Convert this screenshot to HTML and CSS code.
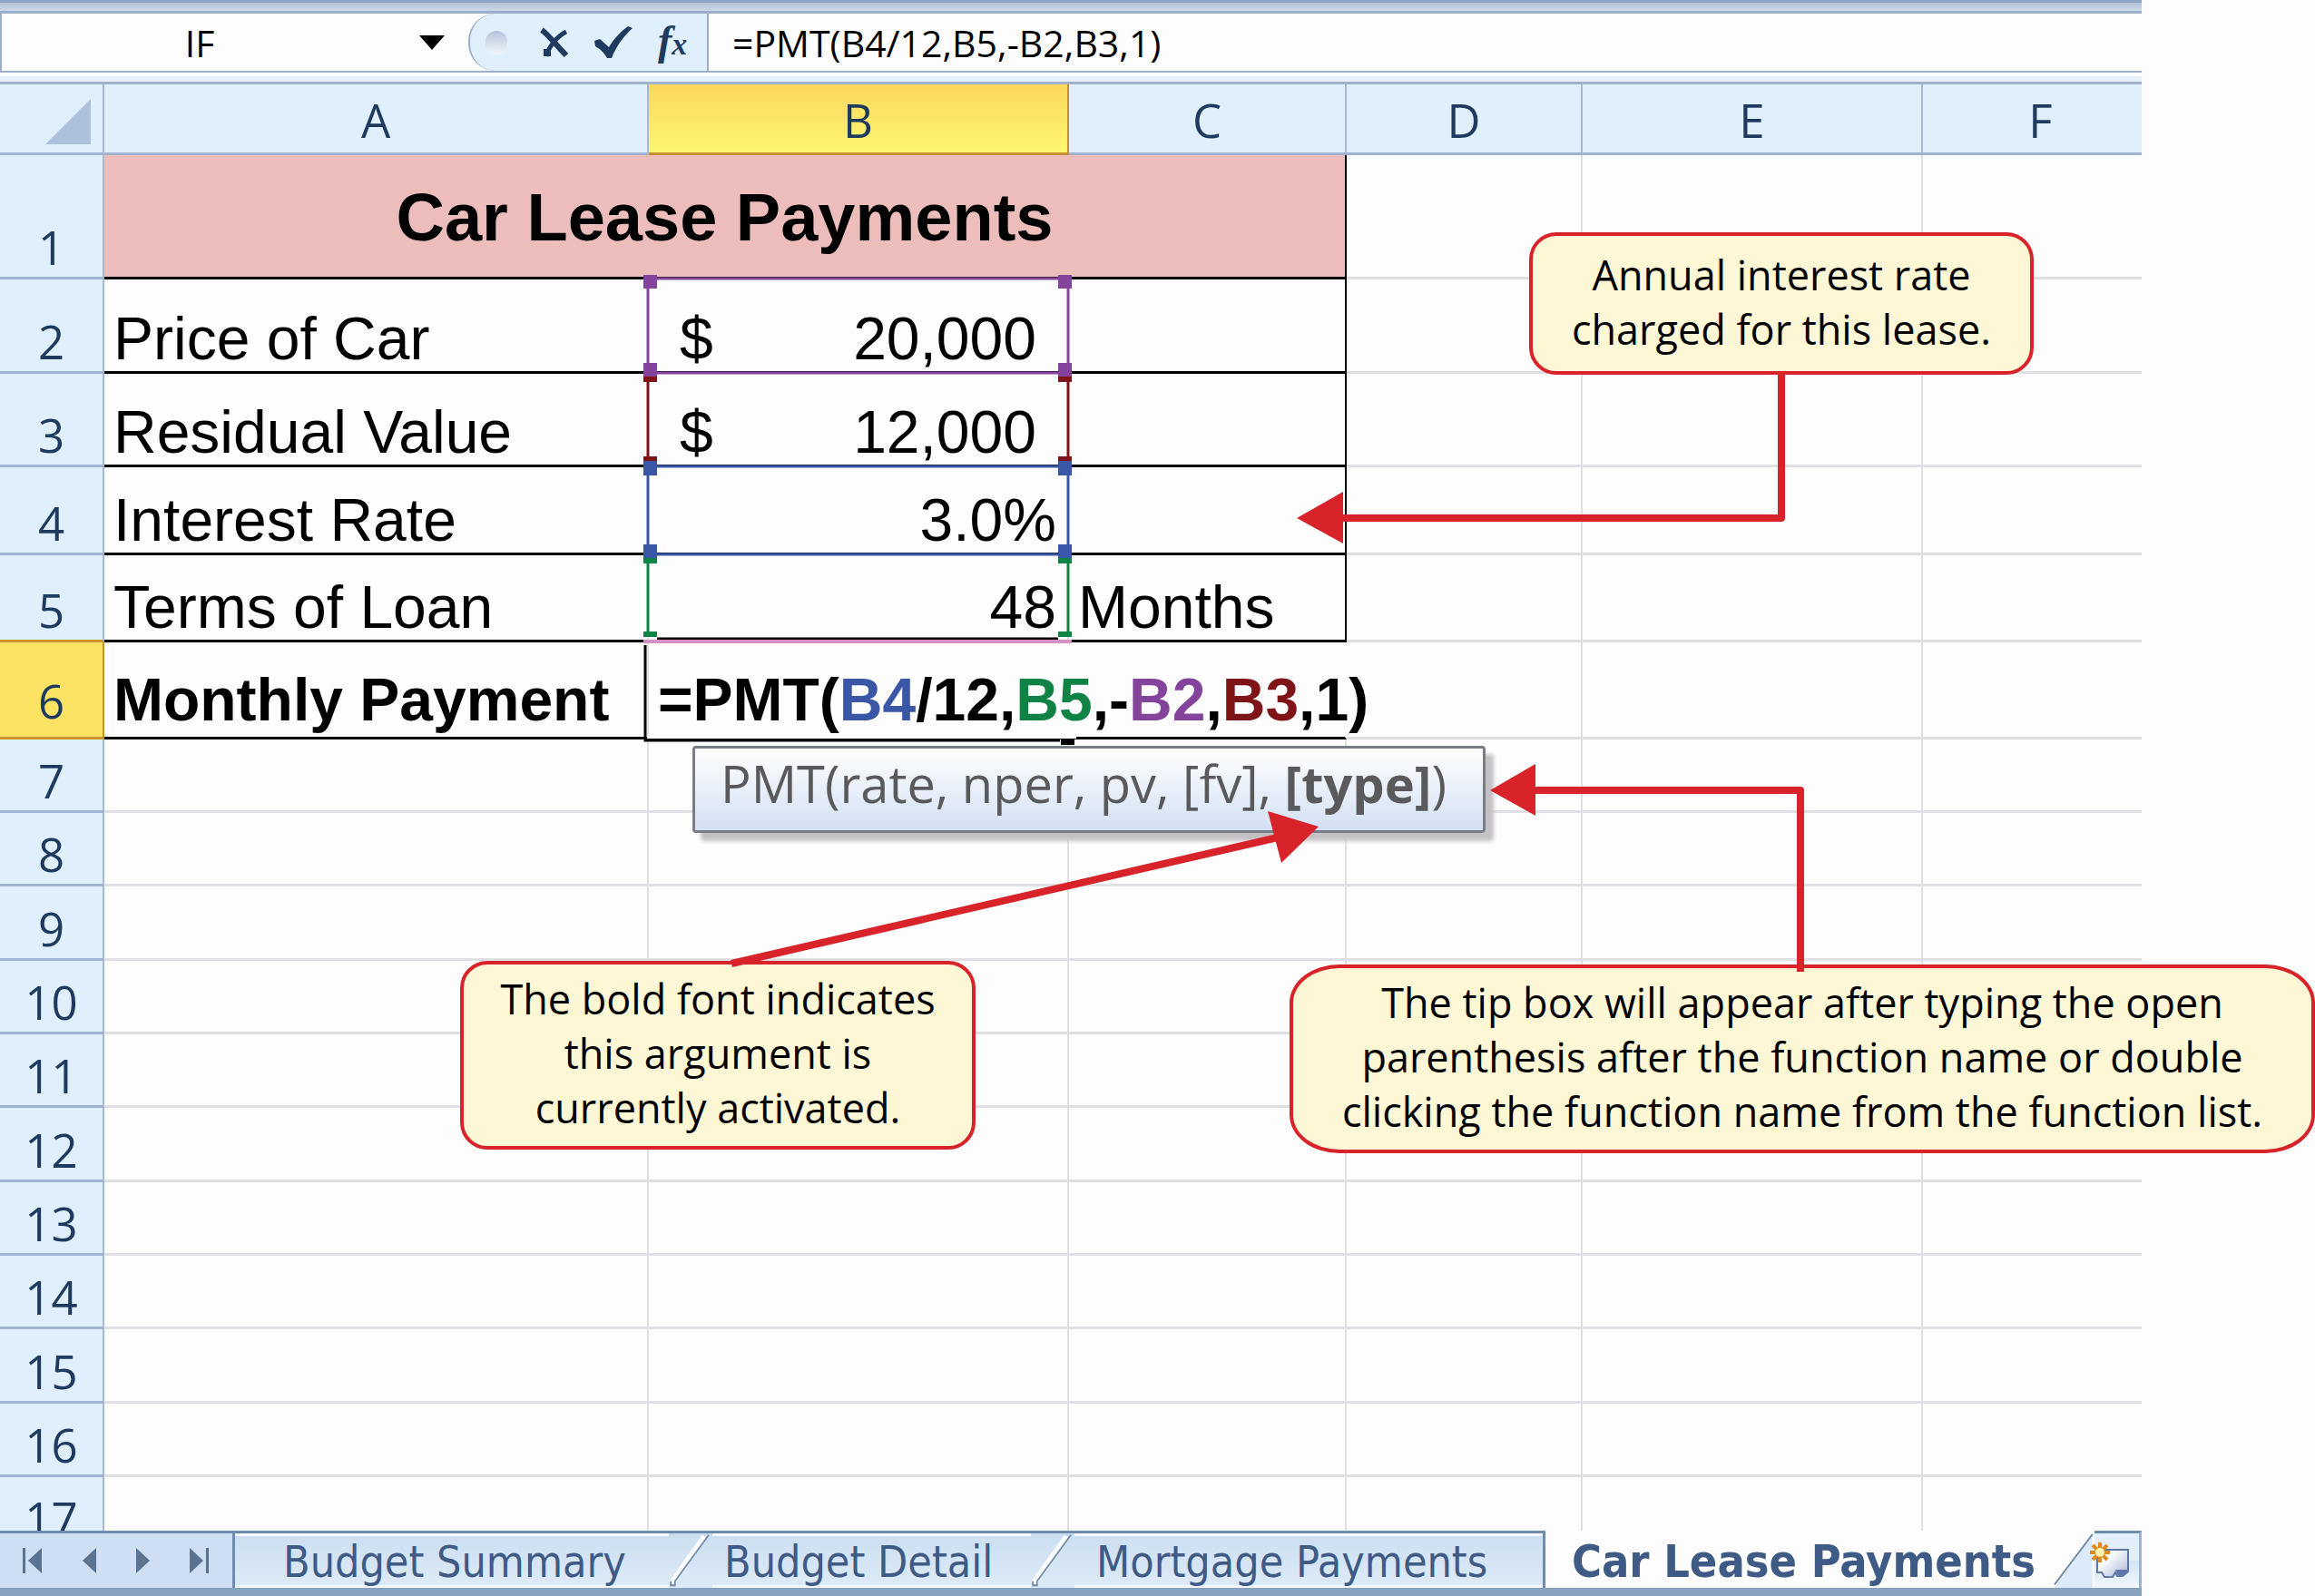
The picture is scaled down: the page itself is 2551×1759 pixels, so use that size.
FILE: index.html
```html
<!DOCTYPE html>
<html lang="en">
<head>
<meta charset="UTF-8" />
<meta name="viewport" content="width=device-width, initial-scale=1" />
<title>Car Lease Payments</title>
<link rel="stylesheet" href="styles.css">
</head>
<body>
  <div class="workbook">
    <div class="ribbon-edge"></div>

    <div class="formula-bar">
      <div class="name-box">
        <input type="text" class="name-input" aria-label="Name box" value="IF">
        <button class="name-toggle" aria-label="Open name list">
          <svg width="28" height="16" viewBox="0 0 28 16"><path d="M0 0H28L14 16Z" fill="#000"/></svg>
        </button>
      </div>
      <div class="formula-tools">
        <span class="pill"></span>
        <button class="tool" aria-label="Cancel">
          <svg width="32" height="34" viewBox="0 0 32 34" fill="none" stroke="#1f3a5f"><path d="M2 3C9 8 20 22 29 31" stroke-width="6"/><path d="M29 5C20 9 9 22 7 32" stroke-width="5"/><path d="M8 24V32" stroke-width="8"/></svg>
        </button>
        <button class="tool" aria-label="Enter">
          <svg width="42" height="36" viewBox="0 0 42 36"><path d="M0 16L6 14L16 23C21 14 29 6 37 0L42 2C32 11 24 22 19 35H14C10 28 6 25 1 22Z" fill="#1f3a5f"/></svg>
        </button>
        <button class="tool tool-fx" aria-label="Insert function">f<small>x</small></button>
      </div>
      <input type="text" class="formula-input" aria-label="Formula bar" value="=PMT(B4/12,B5,-B2,B3,1)">
    </div>

    <div class="grid">
      <table>
        <colgroup>
          <col class="col-head"><col class="col-a"><col class="col-b"><col class="col-c"><col class="col-d"><col class="col-e"><col>
        </colgroup>
        <thead>
          <tr>
            <th class="corner"><svg width="50" height="50" viewBox="0 0 50 50"><path d="M50 0V50H0Z" fill="#adc0dc"/></svg></th>
            <th>A</th><th class="active">B</th><th>C</th><th>D</th><th>E</th><th>F</th>
          </tr>
        </thead>
        <tbody>
          <tr class="row-1"><th>1</th><td colspan="3" class="title boxed edge">Car Lease Payments</td><td></td><td></td><td></td></tr>
          <tr class="row-2"><th>2</th><td class="boxed">Price of Car</td><td class="boxed money"><div><span>$</span><span>20,000</span></div></td><td class="boxed edge"></td><td></td><td></td><td></td></tr>
          <tr class="row-3"><th>3</th><td class="boxed">Residual Value</td><td class="boxed money"><div><span>$</span><span>12,000</span></div></td><td class="boxed edge"></td><td></td><td></td><td></td></tr>
          <tr class="row-4"><th>4</th><td class="boxed">Interest Rate</td><td class="boxed number">3.0%</td><td class="boxed edge"></td><td></td><td></td><td></td></tr>
          <tr class="row-5"><th class="above-active">5</th><td class="boxed">Terms of Loan</td><td class="boxed number">48</td><td class="boxed edge">Months</td><td></td><td></td><td></td></tr>
          <tr class="row-6"><th class="active">6</th><td class="boxed">Monthly Payment</td><td class="boxed editing">=PMT(<span class="ref-blue">B4</span>/12,<span class="ref-green">B5</span>,-<span class="ref-purple">B2</span>,<span class="ref-red">B3</span>,1)</td><td class="boxed open"></td><td></td><td></td><td></td></tr>
          <tr><th>7</th><td></td><td></td><td></td><td></td><td></td><td></td></tr>
          <tr><th>8</th><td></td><td></td><td></td><td></td><td></td><td></td></tr>
          <tr><th>9</th><td></td><td></td><td></td><td></td><td></td><td></td></tr>
          <tr><th>10</th><td></td><td></td><td></td><td></td><td></td><td></td></tr>
          <tr><th>11</th><td></td><td></td><td></td><td></td><td></td><td></td></tr>
          <tr><th>12</th><td></td><td></td><td></td><td></td><td></td><td></td></tr>
          <tr><th>13</th><td></td><td></td><td></td><td></td><td></td><td></td></tr>
          <tr><th>14</th><td></td><td></td><td></td><td></td><td></td><td></td></tr>
          <tr><th>15</th><td></td><td></td><td></td><td></td><td></td><td></td></tr>
          <tr><th>16</th><td></td><td></td><td></td><td></td><td></td><td></td></tr>
          <tr><th>17</th><td></td><td></td><td></td><td></td><td></td><td></td></tr>
        </tbody>
      </table>
    </div>

    <div class="tab-bar">
      <div class="tab-nav">
        <button aria-label="First sheet"><svg width="22" height="28" viewBox="0 0 22 28"><path d="M0 0H3V28H0ZM21 0V28L6 14Z"/></svg></button>
        <button aria-label="Previous sheet"><svg width="22" height="28" viewBox="0 0 22 28"><path d="M20 0V28L5 14Z"/></svg></button>
        <button aria-label="Next sheet"><svg width="22" height="28" viewBox="0 0 22 28"><path d="M3 0V28L18 14Z"/></svg></button>
        <button aria-label="Last sheet"><svg width="22" height="28" viewBox="0 0 22 28"><path d="M1 0V28L16 14ZM19 0H22V28H19Z"/></svg></button>
      </div>
      <button class="tab tab-summary">Budget Summary</button>
      <svg class="slant" width="48" height="66" viewBox="0 0 48 66"><path d="M41 4L1 60" stroke="#fff" stroke-width="7"/><path d="M46 2L5 58V63H0V58" fill="none" stroke="#7189a8" stroke-width="2"/></svg>
      <button class="tab tab-detail">Budget Detail</button>
      <svg class="slant" width="48" height="66" viewBox="0 0 48 66"><path d="M41 4L1 60" stroke="#fff" stroke-width="7"/><path d="M46 2L5 58V63H0V58" fill="none" stroke="#7189a8" stroke-width="2"/></svg>
      <button class="tab tab-mortgage">Mortgage Payments</button>
      <button class="tab tab-active">Car Lease Payments</button>
      <svg class="slant slant-last" width="48" height="66" viewBox="0 0 48 66"><path d="M48 0L2 66H48Z" fill="#dcebf9"/><path d="M48 1L2 62" stroke="#7189a8" stroke-width="2"/></svg>
      <button class="tab-new" aria-label="Insert worksheet">
        <svg width="42" height="42" viewBox="0 0 42 42">
          <defs>
            <linearGradient id="sheet" x1="0" y1="0" x2="1" y2="1">
              <stop offset="0.3" stop-color="#fff"/><stop offset="1" stop-color="#a9b3d6"/>
            </linearGradient>
          </defs>
          <path d="M3 9H37V33L31 38H25L23 34L20 39H11L8 34H3Z" fill="url(#sheet)" stroke="#5f78a8" stroke-width="2"/>
          <path d="M23 31H37V34L31 38H26Z" fill="#5f78a8"/>
          <path d="M6 1V23M-5 12H17M-2 4L14 20M14 4L-2 20" stroke="#e08a1c" stroke-width="4"/>
          <circle cx="6" cy="12" r="5" fill="#fff3b0"/>
        </svg>
      </button>
    </div>
  </div>

  <!-- range outlines and their handles -->
  <svg class="ranges" width="2551" height="1759" viewBox="0 0 2551 1759" fill="none">
    <g stroke-width="3">
      <path d="M714 410V513M1177 410V513" stroke="#7f1418"/>
      <path d="M714 610V702M1177 610V702" stroke="#0f8345"/>
      <rect x="714" y="307" width="463" height="104" stroke="#84449c"/>
      <rect x="714" y="514" width="463" height="97" stroke="#3a56a6"/>
      <path d="M711 711V816H1168M724 704H1166" stroke="#000"/>
      <path d="M709 707H1181" stroke="#d78fc3" stroke-width="4"/>
    </g>
    <path d="M709 415h15v6h-15zM1166 415h15v6h-15zM709 503h15v6h-15zM1166 503h15v6h-15z" fill="#7f1418"/>
    <path d="M709 615h15v6h-15zM1166 615h15v6h-15zM709 696h15v6h-15zM1166 696h15v6h-15z" fill="#0f8345"/>
    <path d="M709 303h15v15h-15zM1166 303h15v15h-15zM709 400h15v15h-15zM1166 400h15v15h-15z" fill="#84449c"/>
    <path d="M709 508h15v16h-15zM1166 508h15v16h-15zM709 600h15v15h-15zM1166 600h15v15h-15z" fill="#3a56a6"/>
    <path d="M713 811h473v3h-473z" fill="#fdfdfd"/>
    <path d="M1169 814h15v7h-15z" fill="#000"/>
  </svg>

  <div class="fn-tip">PMT(rate, nper, pv, [fv], <b>[type]</b>)</div>

  <div class="callout callout-rate">Annual interest rate<br>charged for this lease.</div>
  <div class="callout callout-bold">The bold font indicates<br>this argument is<br>currently activated.</div>
  <div class="callout callout-tip">The tip box will appear after typing the open<br>parenthesis after the function name or double<br>clicking the function name from the function list.</div>

  <svg class="arrows" width="2551" height="1759" viewBox="0 0 2551 1759">
    <g fill="none" stroke="#d8232a" stroke-width="8" stroke-linejoin="round">
      <path d="M1963 412V571H1478"/>
      <path d="M1984 1071V871H1690"/>
      <path d="M806 1062L1408 923"/>
    </g>
    <path d="M1429 571L1480 542V599ZM1642 871L1692 842V899ZM1397 894L1453 911L1412 951Z" fill="#d8232a"/>
  </svg>
</body>
</html>
```

FILE: styles.css
```css
* {
  box-sizing: border-box;
}
body {
  position: relative;
  margin: 0;
  height: 100vh;
  overflow: hidden;
  background: #fdfdfd;
  font-family: "Open Sans", "Noto Sans", sans-serif;
}
button, input {
  margin: 0;
  padding: 0;
  border: 0;
  background: none;
  font: inherit;
  color: inherit;
}
.workbook {
  display: flex;
  flex-direction: column;
  height: 100%;
  margin-right: 191px;
}

/* formula bar */
.ribbon-edge {
  flex: none;
  height: 15px;
  border-top: 3px solid #8fa6c6;
  border-bottom: 3px solid #9daecb;
  background: linear-gradient(#b3bfd2, #cbd9ea);
}
.formula-bar {
  flex: none;
  display: flex;
  height: 65px;
  border-bottom: 2px solid #9daecb;
  font-size: 41px;
}
.name-box {
  display: flex;
  align-items: center;
  width: 516px;
  border-left: 2px solid #9daecb;
}
.name-input {
  width: 436px;
  text-align: center;
  height: 60px;
}
.name-toggle {
  display: flex;
  padding: 8px 24px;
}
.formula-tools {
  display: flex;
  align-items: center;
  gap: 28px;
  width: 265px;
  padding-left: 17px;
  border-left: 2px solid #9daecb;
  border-right: 2px solid #9daecb;
  border-radius: 30px 0 0 30px;
  background: #dfeffc;
}
.pill {
  width: 24px;
  height: 26px;
  margin-right: 8px;
  border-radius: 12px;
  background: linear-gradient(#b5c3da, #f2f6fb);
}
.tool {
  display: flex;
}
.tool-fx {
  align-items: baseline;
  font: italic bold 46px/46px "Liberation Serif", serif;
  color: #1f3a5f;
}
.tool-fx small {
  font-size: 34px;
}
.formula-input {
  flex: 1;
  min-width: 0;
  padding-left: 26px;
}

/* cells */
.grid {
  flex: 1;
  min-height: 0;
  overflow: hidden;
  border-top: 4px solid #fdfdfd;
  background: #e6f1fb;
  padding-top: 6px;
}
table {
  width: calc(100% + 20px);
  table-layout: fixed;
  border-spacing: 0;
  border-top: 3px solid #9fb3cf;
  background: #fdfdfd;
}
.col-head { width: 115px; }
.col-a { width: 600px; }
.col-b { width: 463px; }
.col-c { width: 306px; }
.col-d { width: 260px; }
.col-e { width: 375px; }
th {
  padding: 0 0 7px;
  border-right: 2px solid #a9b9d4;
  border-bottom: 3px solid #9fb3cf;
  background: #dfeffc;
  color: #1f3a5f;
  font-size: 51px;
  font-weight: 400;
  line-height: 52px;
  vertical-align: bottom;
}
thead th {
  height: 78px;
  padding: 0 0 10px;
}
thead .active {
  border-color: #c8912f;
  background: linear-gradient(#fcd75b, #fdf772);
}
thead .corner {
  text-align: right;
  padding: 0 13px 9px 0;
}
.corner svg {
  display: block;
  margin-left: auto;
}
tbody .active {
  border-bottom-color: #c8912f;
  border-right-color: #c8912f;
  background: #fde364;
}
tbody .above-active {
  border-bottom-color: #c8912f;
}
td {
  padding: 0 12px 3px 10px;
  border-right: 2px solid #dfe0e6;
  border-bottom: 3px solid #dfe0e3;
  font: 66px/66px "Liberation Sans", Arial, sans-serif;
  color: #000;
  white-space: nowrap;
  vertical-align: bottom;
}
tbody tr { height: 81px; }
tbody tr:nth-child(3n) { height: 82px; }
tbody tr.row-1 { height: 137px; }
tbody tr.row-2 { height: 104px; }
tbody tr.row-3 { height: 103px; }
tbody tr.row-4 { height: 97px; }
tbody tr.row-5 { height: 96px; }
tbody tr.row-6 { height: 107px; }
.boxed {
  border-bottom-color: #000;
}
.edge {
  border-right-color: #000;
}
.title {
  padding: 0 0 32px;
  background: #edbdbb;
  font-size: 74px;
  font-weight: 700;
  text-align: center;
}
.number {
  text-align: right;
}
.money div {
  display: flex;
  justify-content: space-between;
  padding: 0 22px 0 24px;
}
.row-6 th {
  padding-bottom: 14px;
}
.row-6 td {
  padding-bottom: 8px;
  font-weight: 700;
}
.editing, .open {
  border-right-color: #fdfdfd;
}
.ref-blue { color: #3a56a6; }
.ref-green { color: #0f8345; }
.ref-purple { color: #84449c; }
.ref-red { color: #7f1418; }

/* sheet tabs */
.tab-bar {
  flex: none;
  display: flex;
  height: 72px;
  border-bottom: 9px solid #87a1bf;
  background: #d6e5f5;
  color: #3f5a85;
  font-family: "DejaVu Sans Condensed", "Open Sans", sans-serif;
  font-size: 48px;
}
.tab-nav {
  display: flex;
  align-items: center;
  gap: 39px;
  width: 259px;
  padding-left: 25px;
  border-top: 3px solid #6f8bb0;
  border-right: 3px solid #6f8bb0;
  background: #cfdff3;
  fill: #5a7391;
}
.tab-nav button {
  display: flex;
}
.tab {
  padding-top: 3px;
  border-top: 3px solid #6f8bb0;
  background: linear-gradient(#cbdef1, #deebf8);
  box-shadow: inset 0 3px #f4f8fd, inset 0 -3px #f4f8fd;
  line-height: 57px;
  text-align: left;
  white-space: nowrap;
}
.tab-summary {
  width: 478px;
  padding-left: 53px;
}
.tab-detail {
  width: 351px;
  padding-left: 13px;
}
.tab-mortgage {
  width: 519px;
  padding-left: 24px;
  border-right: 3px solid #6f8bb0;
}
.tab-active {
  flex: 1;
  padding-left: 29px;
  border-top-color: #fdfdfd;
  background: #fdfdfd;
  box-shadow: none;
  font-size: 50px;
  font-weight: 700;
}
.slant {
  flex: none;
  height: 63px;
  border-top: 3px solid #6f8bb0;
  background: linear-gradient(#cbdef1, #deebf8);
}
.slant-last {
  border-top-color: #fdfdfd;
  background: #fdfdfd;
}
.tab-new {
  display: flex;
  align-items: center;
  width: 52px;
  border-top: 3px solid #6f8bb0;
  border-right: 3px solid #9db2d0;
  background: linear-gradient(#e2effb 50%, #d3e4f5 50%, #f1f8fe);
}
.tab-new svg {
  flex: none;
  overflow: visible;
}

/* everything that floats over the cells */
.ranges, .arrows {
  position: absolute;
  top: 0;
  left: 0;
  pointer-events: none;
}
.fn-tip {
  position: absolute;
  top: 822px;
  left: 763px;
  height: 96px;
  padding: 0 40px 0 28px;
  border: 3px solid #7b7d84;
  border-radius: 4px;
  background: linear-gradient(#fff, #d3e0f3);
  box-shadow: 9px 9px 4px #c3c1c4;
  color: #5a5a5c;
  font-size: 56px;
  line-height: 76px;
  white-space: nowrap;
}
.callout {
  position: absolute;
  padding: 8px 0;
  border: 4px solid #d8232a;
  border-radius: 30px;
  background: #fdf7d5;
  color: #000;
  font-size: 45px;
  line-height: 60px;
  text-align: center;
  white-space: nowrap;
}
.callout-rate {
  top: 256px;
  left: 1685px;
  width: 556px;
  padding: 13px 0 16px;
}
.callout-bold {
  top: 1059px;
  left: 507px;
  width: 568px;
  padding-bottom: 12px;
}
.callout-tip {
  top: 1063px;
  left: 1421px;
  width: 1130px;
  padding-bottom: 12px;
  border-radius: 55px / 42px;
}
```
